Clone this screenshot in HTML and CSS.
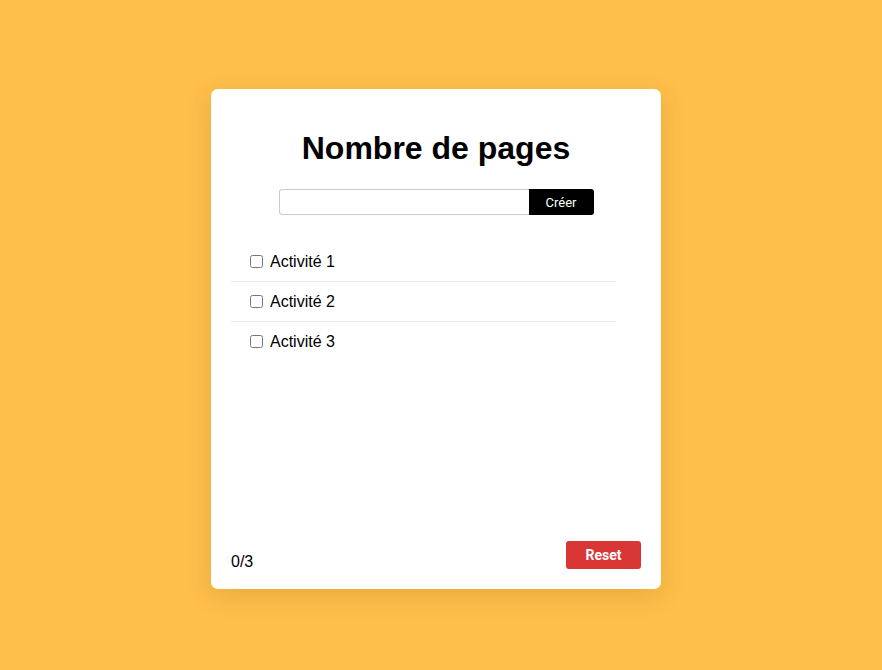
FILE: index.html
```html
<!DOCTYPE html>
<html lang="fr">
<head>
<meta charset="utf-8">
<title>Nombre de pages</title>
<link rel="stylesheet" href="styles.css">
</head>
<body>
<div class="page">
  <div class="card">
    <h1 class="title">Nombre de pages</h1>
    <form class="create" onsubmit="return false">
      <input class="create-input" type="text">
      <button class="create-btn" type="button">Créer</button>
    </form>
    <ul class="list">
      <li class="item"><label class="item-label"><input class="check" type="checkbox"> Activité 1</label></li>
      <li class="item"><label class="item-label"><input class="check" type="checkbox"> Activité 2</label></li>
      <li class="item"><label class="item-label"><input class="check" type="checkbox"> Activité 3</label></li>
    </ul>
    <div class="footer">
      <span class="count">0/3</span>
      <button class="reset" type="button">Reset</button>
    </div>
  </div>
</div>
</body>
</html>
```
FILE: styles.css
```css
html, body {
  margin: 0;
  padding: 0;
}
body {
  background: #ffbf4a;
  font-family: "Liberation Sans", Arial, sans-serif;
  width: 882px;
  height: 670px;
  overflow: hidden;
}
.page {
  display: flex;
  padding: 89px 0 0 211px;
}
.card {
  box-sizing: border-box;
  width: 450px;
  height: 500px;
  background: #fff;
  border-radius: 7px;
  box-shadow: 0 6px 24px rgba(120, 70, 0, 0.18);
  padding: 20px;
  display: flex;
  flex-direction: column;
}
.title {
  margin: 20px 0 22px;
  font-size: 32px;
  line-height: 38px;
  text-align: center;
  font-weight: bold;
  color: #000;
}
.create {
  display: flex;
  justify-content: center;
  margin: 0;
}
.create-input {
  box-sizing: border-box;
  width: 250px;
  height: 26px;
  border: 1px solid #ccc;
  border-right: none;
  border-radius: 3px 0 0 3px;
  margin: 0;
  padding: 2px 6px;
  font: 14px "Liberation Sans", Arial, sans-serif;
  outline: none;
}
.create-btn {
  width: 65px;
  height: 26px;
  margin: 0;
  border: none;
  background: #000;
  color: #fff;
  border-radius: 0 3px 3px 0;
  font: 400 13px Roboto, "Liberation Sans", sans-serif;
  padding: 0;
}
.list {
  list-style: none;
  margin: 27px 0 0;
  padding: 0;
  width: 385px;
}
.item {
  height: 39px;
  display: flex;
  align-items: center;
  border-bottom: 1px solid #e8e8e8;
  padding-left: 15px;
  font-size: 16px;
  color: #000;
}
.item:last-child {
  border-bottom: none;
}
.item-label {
  display: flex;
  align-items: center;
  gap: 4px;
}
.check {
  width: 13px;
  height: 13px;
  margin: 0 3px 0 4px;
}
.footer {
  margin-top: auto;
  display: flex;
  justify-content: space-between;
  align-items: flex-end;
}
.count {
  font-size: 16px;
  line-height: 18px;
  color: #000;
  margin-bottom: -2px;
}
.reset {
  width: 75px;
  height: 28px;
  border: none;
  border-radius: 3px;
  background: #d93636;
  color: #fff;
  font: bold 14px Roboto, "Liberation Sans", sans-serif;
  padding: 0;
}
```
